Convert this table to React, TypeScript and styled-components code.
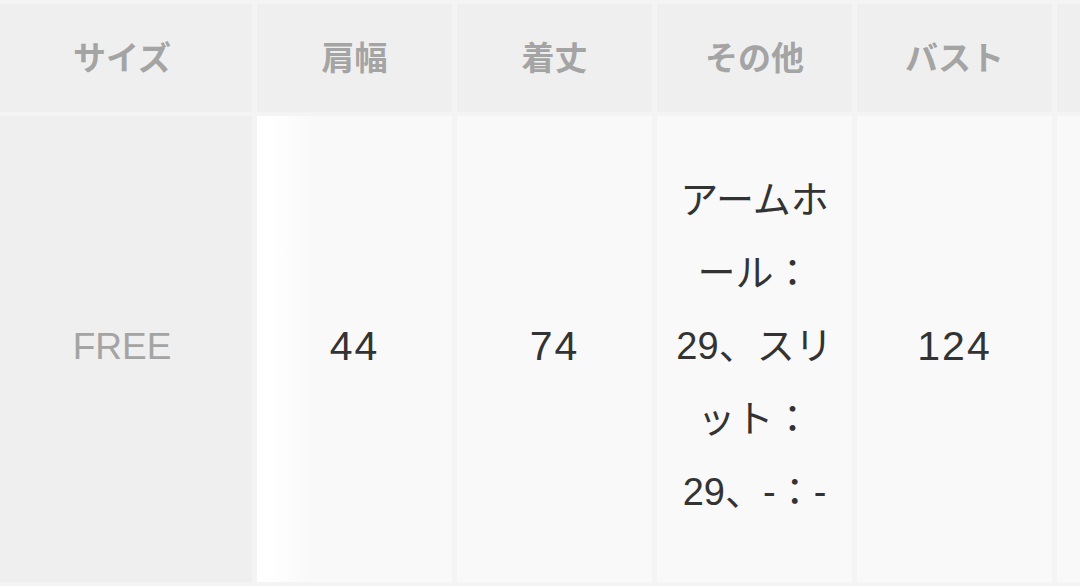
import React from "react";
import styled, { createGlobalStyle } from "styled-components";

const GlobalStyle = createGlobalStyle`
  html, body {
    margin: 0;
    padding: 0;
    background: #f4f4f4;
    overflow: hidden;
  }
  body {
    font-family: "Liberation Sans", "Noto Sans CJK JP", sans-serif;
  }
`;

const Table = styled.div`
  display: grid;
  grid-template-columns: 252px repeat(5, 195px);
  grid-template-rows: 108px 466px;
  column-gap: 5px;
  row-gap: 4px;
  padding-top: 4px;
  width: max-content;
`;

const HeadCell = styled.div<{ $first?: boolean }>`
  display: flex;
  align-items: center;
  justify-content: center;
  padding: 0 ${(p) => (p.$first ? "8px" : "0")} 4px 0;
  background: #efefef;
  color: #a4a4a4;
  font-family: "Noto Sans CJK JP", sans-serif;
  font-weight: 700;
  font-size: 33px;
`;

const LabelCell = styled.div`
  display: flex;
  align-items: center;
  justify-content: center;
  padding: 0 8px 5px 0;
  background: #efefef;
  color: #a4a4a4;
  font-size: 37px;
`;

const ValueCell = styled.div<{ $shaded?: boolean }>`
  display: flex;
  align-items: center;
  justify-content: center;
  padding: 0 12px 5px;
  background: ${(p) =>
    p.$shaded
      ? "linear-gradient(to right, #ffffff 0, #ffffff 12px, #f9f9f9 55px)"
      : "#f9f9f9"};
  color: #333333;
  font-size: 41px;
  letter-spacing: 2px;
`;

const Note = styled.div`
  text-align: center;
  font-size: 38px;
  line-height: 73px;
  letter-spacing: 0;
  color: #333333;
`;

type Column = { head: string; value: string; note?: boolean };

const columns: Column[] = [
  { head: "肩幅", value: "44" },
  { head: "着丈", value: "74" },
  { head: "その他", value: "アームホール：29、スリット：29、-：-", note: true },
  { head: "バスト", value: "124" },
];

const App = () => {
  return (
    <>
      <GlobalStyle />
      <Table>
        <HeadCell $first>サイズ</HeadCell>
        {columns.map((col) => (
          <HeadCell key={col.head}>{col.head}</HeadCell>
        ))}
        {/* next column, scrolled out of view */}
        <HeadCell />
        <LabelCell>FREE</LabelCell>
        {columns.map((col, index) => (
          <ValueCell key={col.head} $shaded={index === 0}>
            {col.note ? <Note>{col.value}</Note> : col.value}
          </ValueCell>
        ))}
        <ValueCell />
      </Table>
    </>
  );
};

export default App;
